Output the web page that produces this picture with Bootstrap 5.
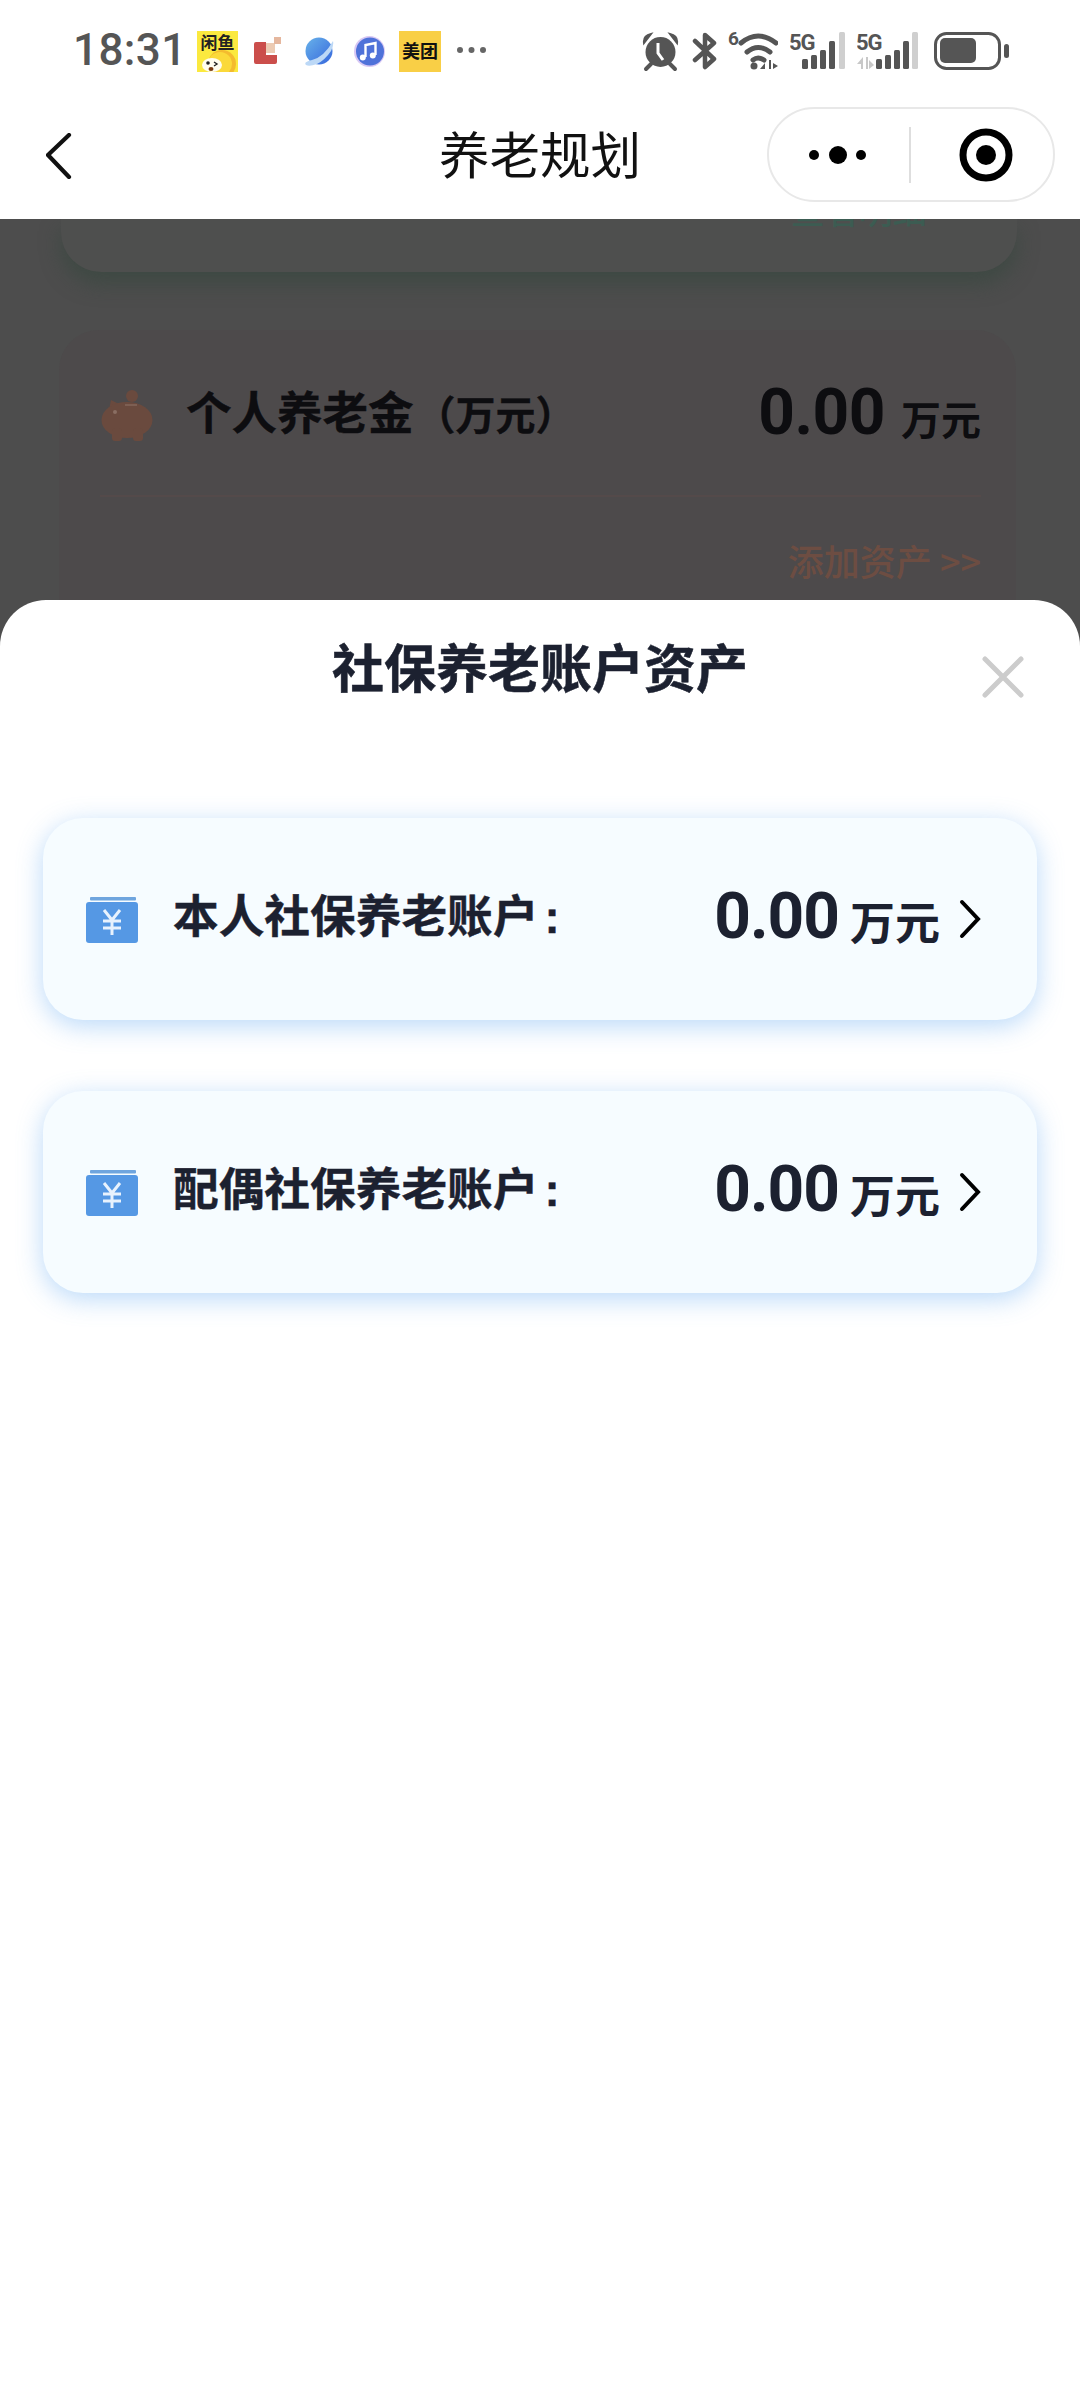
<!DOCTYPE html>
<html lang="zh-CN">
<head>
<meta charset="utf-8">
<title>养老规划</title>
<link href="https://cdn.jsdelivr.net/npm/bootstrap@5.3.0/dist/css/bootstrap.min.css" rel="stylesheet">
<style>
html,body{margin:0;background:#fff;}
body{width:1080px;height:2400px;overflow:hidden;font-family:"Noto Sans CJK SC","Liberation Sans",sans-serif;}
.app-frame{height:2400px;display:flex;flex-direction:column;background:#4d4d4d;}
.status-strip{height:100px;padding:28px 71px 0 73px;color:#555;background:#fff;flex:none;}
.status-strip svg{display:block;flex:none;}
.clock{font:500 44px/44px Roboto,sans-serif;width:106px;letter-spacing:.4px;margin-right:18px;white-space:nowrap;}
.top-nav{height:119px;flex:none;display:grid;grid-template-columns:1fr auto 1fr;background:#fff;position:relative;z-index:2;}
.nav-title{font-size:50.5px;line-height:105px;color:#111;font-weight:400;}
.back-btn{padding:33px 0 0 46px;}
.capsule-wrap{padding:7px 25px 0 0;display:flex;justify-content:flex-end;}
.capsule{width:288px;height:95px;border:2px solid #e8e8e8;border-radius:48px;}
.capsule-rule{width:2px;height:56px;background:#dedede;}
.dim-area{height:381px;overflow:hidden;background:#4d4d4d;flex:none;}
.dim-card-a{margin:0 63px 0 61px;height:53px;background:#4e4f4e;border-radius:0 0 40px 40px;box-shadow:0 12px 20px rgba(58,72,64,.75);position:relative;}
.dim-link-a{position:absolute;right:44px;top:-29px;font-size:34px;line-height:40px;color:#3c5c52;white-space:nowrap;font-weight:500;}
.dim-card-b{margin:58px 64px 0 59px;height:320px;background:#4d4a4b;border-radius:40px 40px 0 0;padding:58px 35px 0 41px;}
.dim-pig{width:53px;height:52px;flex:none;display:block;margin-top:2px;}
.dim-name{font-size:45.5px;line-height:52px;font-weight:700;color:#0d0d10;margin:-4px 0 0 33px;white-space:nowrap;-webkit-text-stroke:.4px #0d0d10;}
.dim-unit{font-size:40px;font-weight:700;margin-left:2px;}
.dim-value{font:700 64px/52px Roboto,sans-serif;color:#0d0d10;letter-spacing:-.5px;margin-top:-1px;}
.dim-tail{font-size:40px;line-height:52px;font-weight:700;color:#0d0d10;margin:4px 0 0 16px;}
.dim-rule{height:2px;background:#544a4a;margin-top:51px;}
.dim-add{font-size:36px;line-height:44px;color:#6d4d42;text-align:right;margin-top:41px;white-space:nowrap;font-weight:500;}
.sheet-panel{flex:1;background:#fff;border-radius:46px 46px 0 0;position:relative;z-index:3;padding:0 43px;}
.sheet-head{height:218px;position:relative;}
.sheet-title{font-size:52px;line-height:60px;font-weight:700;color:#1c2130;text-align:center;padding-top:36px;margin:0;-webkit-text-stroke:.5px #1c2130;}
.sheet-close{position:absolute;right:13px;top:56px;display:block;}
.asset-card{height:202px;background:#f6fcff;border:0;border-radius:40px;box-shadow:0 6px 26px rgba(90,165,240,.42);padding:0 56px 0 43px;margin-bottom:71px;color:#1c2130;}
.asset-icon{width:52px;height:46px;flex:none;display:block;margin-top:1px;}
.asset-label{font-size:45.7px;line-height:60px;font-weight:700;margin-left:35px;white-space:nowrap;margin-top:-8px;-webkit-text-stroke:.4px #1c2130;}
.asset-colon{font-family:"Liberation Sans",sans-serif;margin-left:6px;}
.asset-value{font:700 64px/60px Roboto,sans-serif;margin-left:auto;margin-top:-4px;margin-right:1px;letter-spacing:-1px;}
.asset-unit{font-size:45px;line-height:60px;font-weight:700;margin-left:10px;margin-top:4px;white-space:nowrap;}
.asset-chevron{width:22px;height:40px;flex:none;display:block;margin-left:19px;}
</style>
</head>
<body>
<div class="app-frame">

  <div class="status-strip d-flex justify-content-between align-items-start">
    <div class="d-flex align-items-start">
      <span class="clock">18:31</span>
      <svg width="41" height="44" viewBox="197 28 41 44">
        <rect x="197" y="31" width="41" height="41" fill="#fbe93f"/>
        <circle cx="222" cy="64" r="14" fill="#f4bb2f"/>
        <circle cx="220" cy="64" r="12" fill="#fbd93a"/>
        <ellipse cx="212" cy="65" rx="10" ry="7" fill="#fffdf0"/>
        <circle cx="208" cy="63" r="1.8" fill="#222"/>
        <path d="M214 62l3 2-3 2" stroke="#222" stroke-width="1.4" fill="none"/>
        <ellipse cx="211" cy="69" rx="2.5" ry="2" fill="#7a3b10"/>
        <text x="217.5" y="49" text-anchor="middle" font-size="17" font-weight="700" fill="#222" font-family="Noto Sans CJK SC">闲鱼</text>
      </svg>
      <svg class="ms-3" width="27" height="44" viewBox="255 28 27 44">
        <path d="M255 44q0-2 2-2h10v13h11v7q0 2-2 2h-19q-2 0-2-2z" fill="#cb4e4b"/>
        <rect x="267" y="43" width="9" height="10" fill="#eccbb3"/>
        <rect x="275" y="37" width="7" height="7" fill="#e5b79e"/>
      </svg>
      <svg style="margin-left:23px" width="30" height="44" viewBox="305 28 30 44">
        <defs><linearGradient id="pl" x1="0" y1="0" x2="1" y2="1"><stop offset="0" stop-color="#68b2ea"/><stop offset="1" stop-color="#3566dc"/></linearGradient></defs>
        <circle cx="320" cy="51" r="13.5" fill="url(#pl)"/>
        <path d="M307 65q-3-3 6-5q12-3 21-19q1 4-2 10q-6 9-14 13q-8 3-11 1z" fill="#bcd8f6"/>
      </svg>
      <svg style="margin-left:20px" width="31" height="44" viewBox="355 28 31 44">
        <circle cx="370.5" cy="51.5" r="15.5" fill="#d8c8f4"/>
        <circle cx="371" cy="51.5" r="14" fill="#4f72d9"/>
        <path d="M366.500 57V45l10-2v12" stroke="#fff" stroke-width="2.400" fill="none"/>
        <circle cx="363.800" cy="57.500" r="3" fill="#fff"/>
        <circle cx="373.800" cy="55.500" r="3" fill="#fff"/>
      </svg>
      <svg style="margin-left:14px" width="42" height="44" viewBox="400 28 42 44">
        <rect x="400" y="31" width="42" height="41" fill="#f9cf46"/>
        <text x="421" y="58" text-anchor="middle" font-size="18" font-weight="700" fill="#111" font-family="Noto Sans CJK SC">美团</text>
      </svg>
      <svg style="margin-left:16px" width="29" height="44" viewBox="458 28 29 44">
        <circle cx="461" cy="50" r="3" fill="#666"/><circle cx="472.500" cy="50" r="3" fill="#666"/><circle cx="484" cy="50" r="3" fill="#666"/>
      </svg>
    </div>
    <div class="d-flex align-items-start">
      <svg width="37" height="44" viewBox="642 28 37 44">
        <circle cx="660.500" cy="52" r="15" fill="#555"/>
        <path d="M644 43q-1-7 7-9zM677 43q1-7-7-9z" fill="#555" stroke="#555" stroke-width="2"/>
        <path d="M651 64l-5 5M670 64l5 5" stroke="#555" stroke-width="4" stroke-linecap="round"/>
        <path d="M658 43v10l5 7" stroke="#fff" stroke-width="3" fill="none"/>
      </svg>
      <svg style="margin-left:13px" width="25" height="44" viewBox="692 28 25 44">
        <path d="M695 41l19 18-9 8V35l9 8-19 17" stroke="#555" stroke-width="4.500" fill="none" stroke-linejoin="round" stroke-linecap="round"/>
      </svg>
      <svg style="margin-left:11px" width="50" height="44" viewBox="728 28 50 44">
        <text x="728" y="45" font-size="19" font-weight="700" fill="#555" font-family="Roboto">6</text>
        <path d="M741 43q17-14 35 0M747 52q11-9 23 0M753 60q5-4 11 0" stroke="#555" stroke-width="5" fill="none" stroke-linecap="round"/>
        <circle cx="754" cy="66" r="3.500" fill="#555"/>
        <path d="M760 69l5-6v6zM769 60h2v9h-2zM773 63l5 3-5 3z" fill="#555"/>
      </svg>
      <svg style="margin-left:12px" width="55" height="44" viewBox="790 28 55 44">
        <text x="789" y="50" font-size="22" font-weight="700" fill="#555" font-family="Roboto" letter-spacing="-1">5G</text>
        <rect x="802" y="59" width="6" height="10" rx="1.500" fill="#555"/>
        <rect x="811" y="55" width="6" height="14" rx="1.500" fill="#555"/>
        <rect x="820" y="50" width="6" height="19" rx="1.500" fill="#555"/>
        <rect x="829" y="41" width="6" height="28" rx="1.500" fill="#555"/>
        <rect x="839" y="32" width="6" height="37" rx="1.500" fill="#cfcfcf"/>
      </svg>
      <svg style="margin-left:12px" width="61" height="44" viewBox="857 28 61 44">
        <text x="856" y="50" font-size="22" font-weight="700" fill="#555" font-family="Roboto" letter-spacing="-1">5G</text>
        <path d="M857 64l6-7v12h-2v-5zM866 57h2v12h-2zM869 60l5 5-5 4z" fill="#c8c8c8"/>
        <rect x="876" y="59" width="6" height="10" rx="1.500" fill="#555"/>
        <rect x="885" y="55" width="6" height="14" rx="1.500" fill="#555"/>
        <rect x="894" y="50" width="6" height="19" rx="1.500" fill="#555"/>
        <rect x="903" y="41" width="6" height="28" rx="1.500" fill="#555"/>
        <rect x="912" y="32" width="6" height="37" rx="1.500" fill="#cfcfcf"/>
      </svg>
      <svg style="margin-left:16px" width="75" height="44" viewBox="934 28 75 44">
        <rect x="935.500" y="33.500" width="64" height="35" rx="11" fill="none" stroke="#555" stroke-width="3"/>
        <rect x="940" y="38" width="36" height="25" rx="5" fill="#555"/>
        <rect x="1004" y="44" width="5" height="14" rx="2.500" fill="#555"/>
      </svg>
    </div>
  </div>

  <div class="top-nav">
    <div class="back-btn">
      <svg width="26" height="46" viewBox="46 133 26 46" style="display:block"><path d="M69 135L48 155l21 22" stroke="#111" stroke-width="4.200" fill="none" stroke-linecap="round"/></svg>
    </div>
    <div class="nav-title">养老规划</div>
    <div class="capsule-wrap">
      <div class="capsule d-flex align-items-center">
        <svg style="margin-left:35px" width="70" height="24" viewBox="0 0 70 24">
          <circle cx="10" cy="12" r="5" fill="#000"/><circle cx="34" cy="12" r="9" fill="#000"/><circle cx="57" cy="12" r="5" fill="#000"/>
        </svg>
        <div class="capsule-rule" style="margin-left:35px"></div>
        <svg style="margin-left:48px" width="54" height="54" viewBox="0 0 54 54">
          <circle cx="27" cy="27" r="23" fill="none" stroke="#000" stroke-width="7"/><circle cx="27" cy="27" r="10" fill="#000"/>
        </svg>
      </div>
    </div>
  </div>

  <div class="dim-area">
    <div class="dim-card-a"><span class="dim-link-a">查看明细 &gt;&gt;</span></div>
    <div class="dim-card-b">
      <div class="d-flex align-items-start">
        <svg class="dim-pig" viewBox="0 0 53 52">
          <circle cx="32" cy="6" r="6" fill="#6a4a3e"/>
          <path d="M9 20l2-10 8 4z" fill="#6a4a3e"/>
          <ellipse cx="27" cy="30" rx="25.500" ry="18" fill="#6a4a3e"/>
          <rect x="12" y="38" width="10" height="13" rx="3" fill="#6a4a3e"/>
          <rect x="33" y="38" width="10" height="13" rx="3" fill="#6a4a3e"/>
          <circle cx="15" cy="22" r="2" fill="#8a6e63"/>
          <rect x="25" y="14" width="12" height="2" fill="#7d5f53"/>
        </svg>
        <span class="dim-name">个人养老金<span class="dim-unit">（万元）</span></span>
        <span class="dim-value ms-auto">0.00</span>
        <span class="dim-tail">万元</span>
      </div>
      <div class="dim-rule"></div>
      <div class="dim-add">添加资产 &gt;&gt;</div>
    </div>
  </div>

  <div class="sheet-panel">
    <div class="sheet-head">
      <h1 class="sheet-title">社保养老账户资产</h1>
      <svg class="sheet-close" width="42" height="42" viewBox="0 0 42 42"><path d="M3 3l36 36M39 3L3 39" stroke="#cccccc" stroke-width="5" stroke-linecap="round"/></svg>
    </div>

    <div class="card asset-card flex-row align-items-center">
      <svg class="asset-icon" viewBox="0 0 52 46">
        <rect x="4" y="0" width="46" height="3.500" rx="1" fill="#6fa5de"/>
        <path d="M0 8q0-3 3-3h46q3 0 3 3v35q0 3-3 3H3q-3 0-3-3z" fill="#5598e4"/>
        <path d="M18 13l8 10 8-10M26 23v15M17 24h18M17 31h18" stroke="#e8f2fd" stroke-width="3" fill="none"/>
      </svg>
      <span class="asset-label">本人社保养老账户<span class="asset-colon">:</span></span>
      <span class="asset-value">0.00</span>
      <span class="asset-unit">万元</span>
      <svg class="asset-chevron" viewBox="0 0 22 40"><path d="M3 3l16 17L3 37" stroke="#000" stroke-width="4" fill="none" stroke-linecap="round"/></svg>
    </div>

    <div class="card asset-card flex-row align-items-center">
      <svg class="asset-icon" viewBox="0 0 52 46">
        <rect x="4" y="0" width="46" height="3.500" rx="1" fill="#6fa5de"/>
        <path d="M0 8q0-3 3-3h46q3 0 3 3v35q0 3-3 3H3q-3 0-3-3z" fill="#5598e4"/>
        <path d="M18 13l8 10 8-10M26 23v15M17 24h18M17 31h18" stroke="#e8f2fd" stroke-width="3" fill="none"/>
      </svg>
      <span class="asset-label">配偶社保养老账户<span class="asset-colon">:</span></span>
      <span class="asset-value">0.00</span>
      <span class="asset-unit">万元</span>
      <svg class="asset-chevron" viewBox="0 0 22 40"><path d="M3 3l16 17L3 37" stroke="#000" stroke-width="4" fill="none" stroke-linecap="round"/></svg>
    </div>
  </div>

</div>
<script src="https://cdn.jsdelivr.net/npm/bootstrap@5.3.0/dist/js/bootstrap.bundle.min.js"></script>
</body>
</html>
